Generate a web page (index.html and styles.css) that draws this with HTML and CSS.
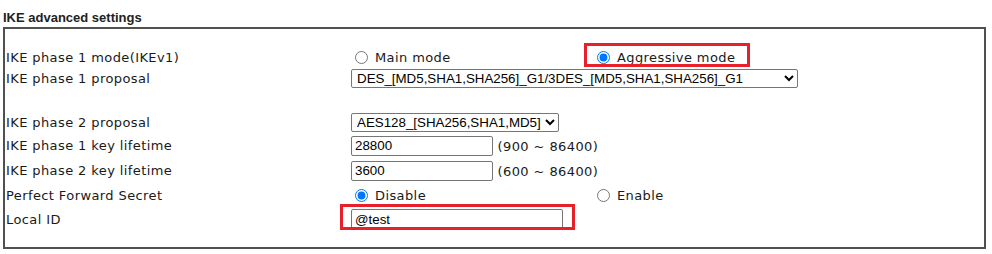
FILE: index.html
```
<!DOCTYPE html>
<html>
<head>
    <link rel="stylesheet" href="styles.css">
</head>
<body>

    <div class="title">IKE advanced settings</div>

    <div class="box">
        <table class="ike">
            <tr class="r1">
                <td class="lbl">IKE phase 1 mode(IKEv1)</td>
                <td>
                    <div class="pair">
                        <label><input type="radio" name="mode"> Main mode</label>
                        <label><input type="radio" name="mode" checked> Aggressive mode</label>
                    </div>
                </td>
            </tr>
            <tr class="r2">
                <td class="lbl">IKE phase 1 proposal</td>
                <td>
                    <select class="p1">
                        <option>DES_[MD5,SHA1,SHA256]_G1/3DES_[MD5,SHA1,SHA256]_G1</option>
                    </select>
                </td>
            </tr>
            <tr class="r3"><td></td><td></td></tr>
            <tr class="r4">
                <td class="lbl">IKE phase 2 proposal</td>
                <td>
                    <select class="p2">
                        <option>AES128_[SHA256,SHA1,MD5]</option>
                    </select>
                </td>
            </tr>
            <tr class="r5">
                <td class="lbl">IKE phase 1 key lifetime</td>
                <td><input type="text" class="num" value="28800"> <span class="hint">(900 ~ 86400)</span></td>
            </tr>
            <tr class="r5">
                <td class="lbl">IKE phase 2 key lifetime</td>
                <td><input type="text" class="num" value="3600"> <span class="hint">(600 ~ 86400)</span></td>
            </tr>
            <tr class="r7">
                <td class="lbl">Perfect Forward Secret</td>
                <td>
                    <div class="pair">
                        <label><input type="radio" name="pfs" checked> Disable</label>
                        <label><input type="radio" name="pfs"> Enable</label>
                    </div>
                </td>
            </tr>
            <tr class="r8">
                <td class="lbl">Local ID</td>
                <td><input type="text" class="lid" value="@test"></td>
            </tr>
        </table>

        <!-- red marks drawn over the screenshot -->
        <div class="mark mark-mode"></div>
        <div class="mark mark-id"></div>
    </div>

</body>
</html>
```

FILE: styles.css
```
body {
    margin: 0;
    background-color: white;
    color: #1a1a1a;
    font-family: "DejaVu Sans", Verdana, sans-serif;
    font-size: 13px;
    letter-spacing: 0.4px;
}

.title {
    font-family: "Liberation Sans", Arial, sans-serif;
    font-weight: bold;
    font-size: 13px;
    letter-spacing: 0;
    color: #222;
    padding: 10px 0 0 3px;
    height: 17px;
}

.box {
    position: relative;
    margin-left: 3px;
    width: 979px;
    height: 218px;
    border: 2px solid #505050;
}

.ike {
    border-collapse: collapse;
    margin-top: 17px;
}

.ike td {
    padding: 0;
    vertical-align: middle;
}

.lbl {
    width: 345px;
    padding-left: 1px !important;
}

.r1 { height: 22px; }
.r2 { height: 21px; }
.r3 { height: 22px; }
.r4 { height: 22px; }
.r5 { height: 25px; }
.r7 { height: 24px; }
.r8 { height: 24px; }

.pair {
    display: grid;
    grid-template-columns: 242px 200px;
    padding-left: 4px;
}

.pair label {
    display: flex;
    align-items: center;
    gap: 7px;
}

.pair input {
    margin: 0;
    width: 13px;
    height: 13px;
}

select {
    font-family: "Liberation Sans", Arial, sans-serif;
    font-size: 13.33px;
    letter-spacing: 0;
    color: black;
    height: 19px;
    border: 1px solid #767676;
    border-radius: 2px;
    background-color: white;
    padding: 0 0 0 1px;
}

.p1 { width: 447px; }
.p2 { width: 208px; }

input[type=text] {
    font-family: "Liberation Sans", Arial, sans-serif;
    font-size: 13.33px;
    letter-spacing: 0;
    color: black;
    height: 20px;
    box-sizing: border-box;
    border: 1px solid #767676;
    border-radius: 2px;
    padding: 0 3px;
    margin: 0;
}

.num { width: 142px; }
.lid { width: 212px; }

.mark {
    position: absolute;
    border: 3px solid #e8202a;
}

.mark-mode {
    left: 579px;
    top: 14px;
    width: 160px;
    height: 18px;
}

.mark-id {
    left: 335px;
    top: 175px;
    width: 229px;
    height: 20px;
}
```
